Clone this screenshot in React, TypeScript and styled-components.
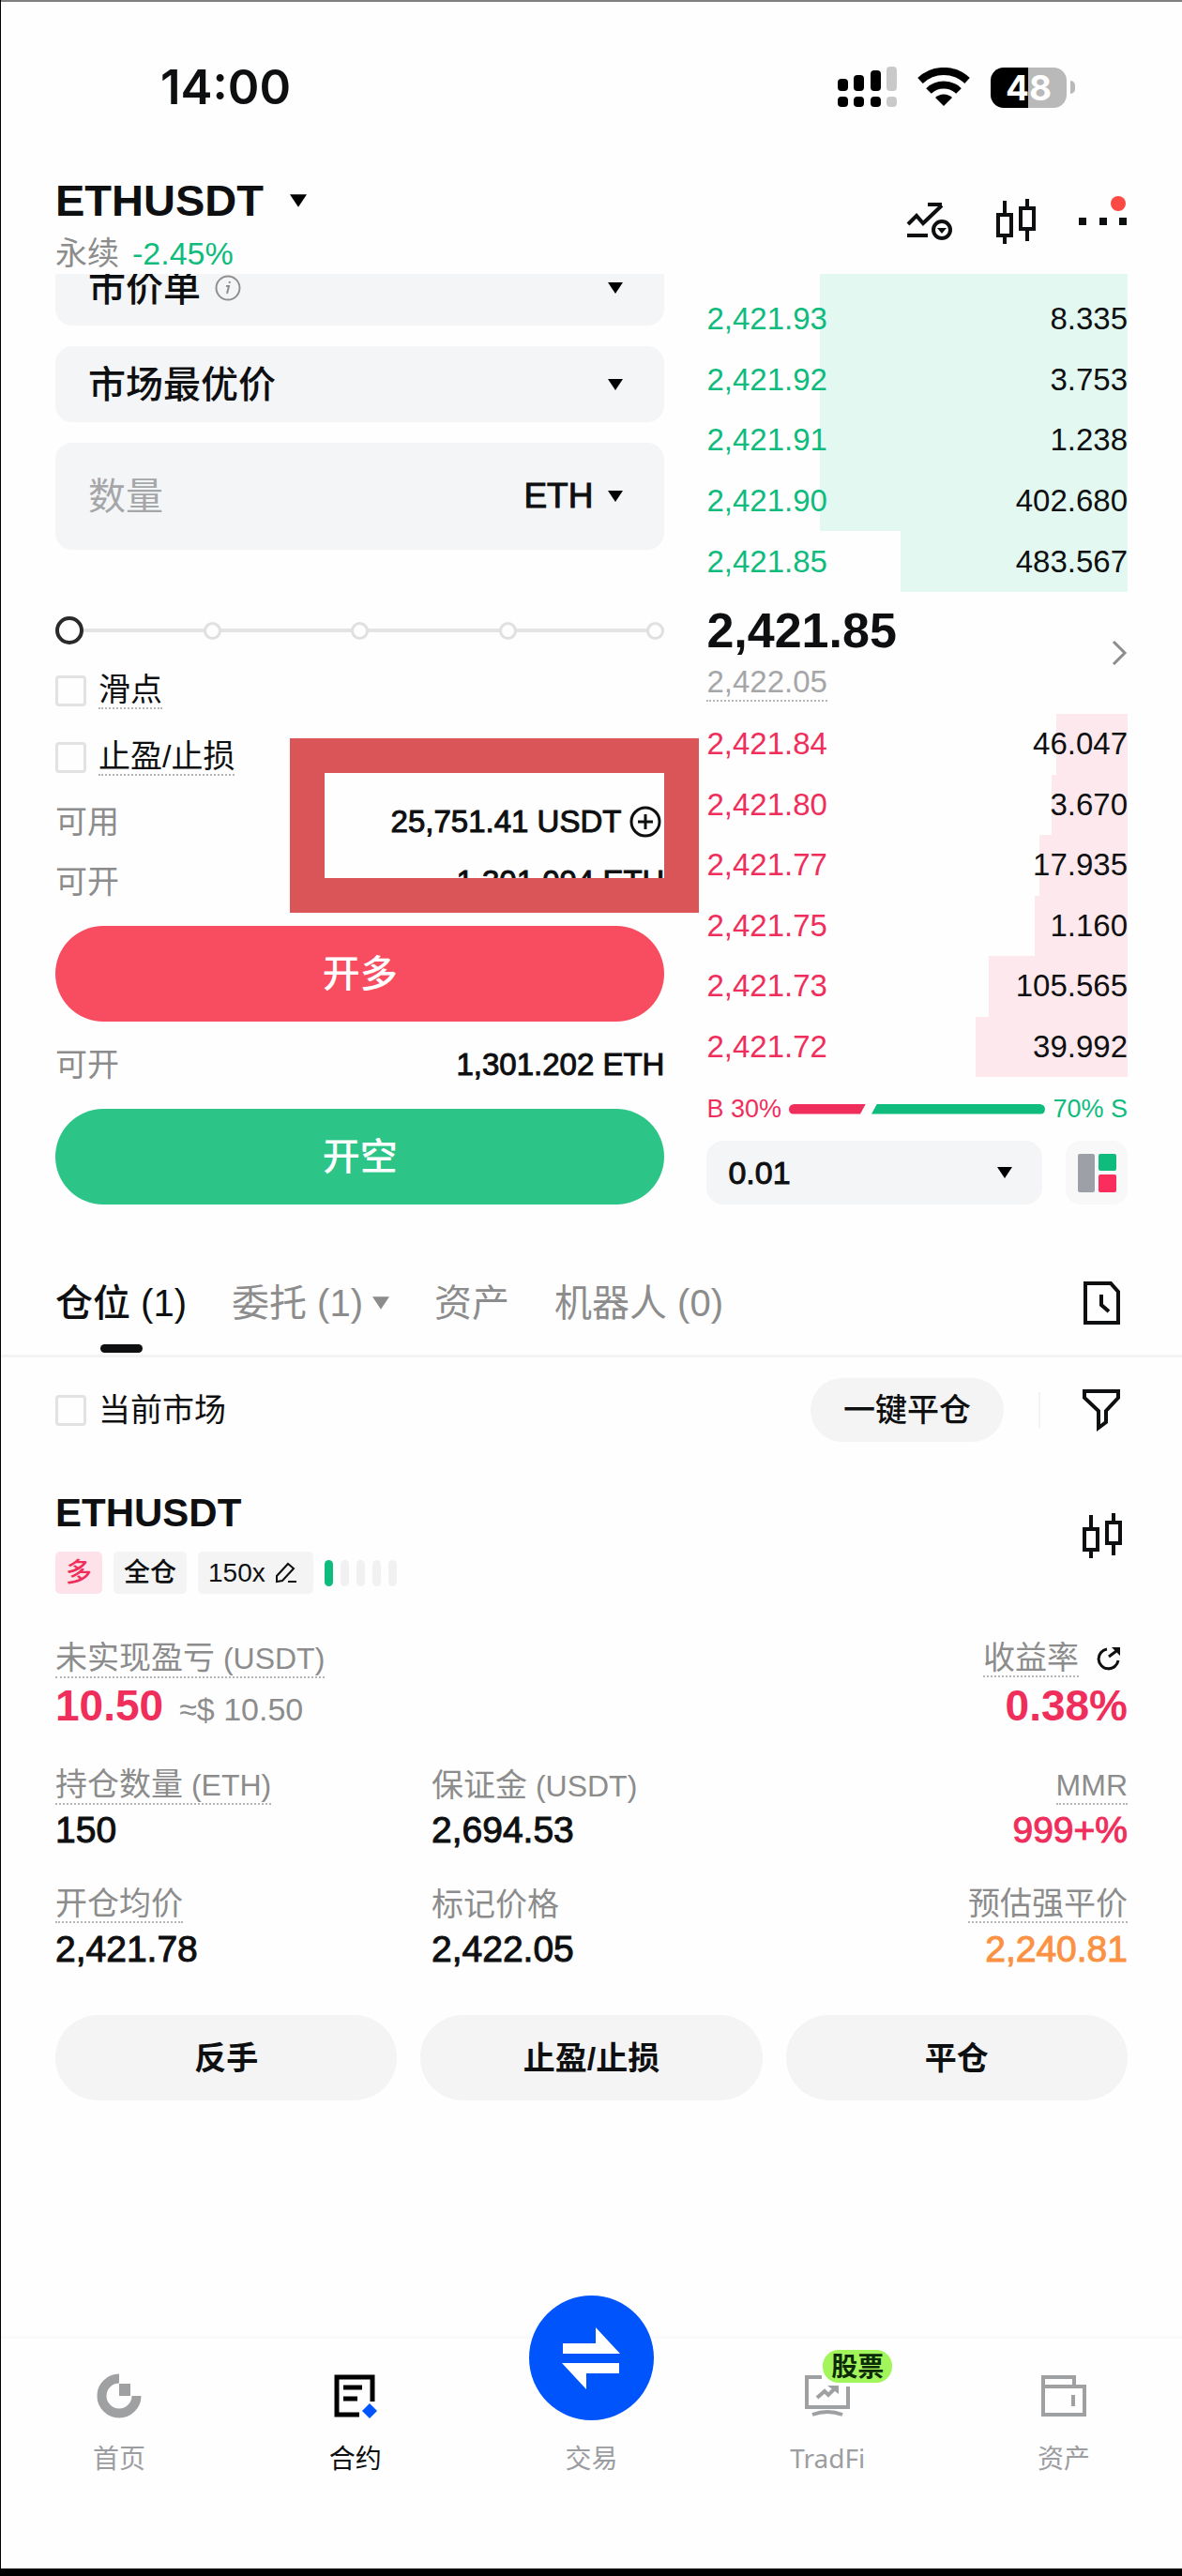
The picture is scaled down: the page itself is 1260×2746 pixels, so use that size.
import React, { useState } from "react";
import styled, { createGlobalStyle } from "styled-components";

const c = {
  ink: "#0e0f10",
  grey: "#8c8c8c",
  hint: "#a5a6a8",
  line: "#f3f3f3",
  field: "#f4f5f7",
  soft: "#f4f4f4",
  up: "#0fbb7d",
  down: "#f02e5b",
  upSoft: "#e3f8f1",
  downSoft: "#fde9ed",
};

const GlobalStyle = createGlobalStyle`
  * { box-sizing: border-box; }
  body {
    margin: 0;
    background: #fefefe;
    color: ${c.ink};
    font-family: "Liberation Sans", "Noto Sans CJK SC", sans-serif;
    font-size: 34px;
    line-height: 40px;
  }
  button, input, select {
    font: inherit;
    color: inherit;
    margin: 0;
    padding: 0;
    border: 0;
    background: none;
  }
  svg { display: block; flex: none; }
`;

const Page = styled.div`
  display: flex;
  flex-direction: column;
  min-height: 100vh;
  border: solid #000;
  border-width: 0 0 8px 1px;
  box-shadow: inset 0 2px 0 #808080;
`;

const StatusBar = styled.div`
  display: flex;
  align-items: center;
  justify-content: space-between;
  height: 186px;
  padding: 0 114px 0 170px;
`;
const Clock = styled.time`
  font-family: Inter, sans-serif;
  font-size: 51px;
  font-weight: 600;
`;
const StatusIcons = styled.div`
  display: flex;
  align-items: center;
  gap: 22px;
`;
const Battery = styled.div`
  display: flex;
  align-items: center;
  gap: 4px;
  &::after {
    content: "";
    width: 5px;
    height: 14px;
    border-radius: 0 5px 5px 0;
    background: #b9b9b9;
  }
`;
const BatteryBody = styled.div`
  width: 81px;
  height: 43px;
  border-radius: 14px;
  background: linear-gradient(to right, #000 50%, #b9b9b9 50%);
  color: #fff;
  font-family: Inter, sans-serif;
  font-size: 37px;
  line-height: 43px;
  font-weight: 700;
  text-align: center;
`;

const Header = styled.header`
  display: flex;
  justify-content: space-between;
  align-items: flex-start;
  height: 106px;
  padding: 0 58px;
`;
const PairButton = styled.button`
  display: flex;
  align-items: center;
  gap: 28px;
  font-size: 47px;
  line-height: 56px;
  font-weight: 700;
`;
const PairInfo = styled.div`
  display: flex;
  gap: 14px;
  margin-top: 8px;
  color: ${c.grey};
`;
const Change = styled.span`
  color: ${c.up};
`;
const HeaderTools = styled.div`
  display: flex;
  align-items: center;
  gap: 45px;
  height: 99px;
`;
const IconButton = styled.button`
  display: grid;
  place-items: center;
`;

const Trade = styled.main`
  display: grid;
  grid-template-columns: minmax(0, 650fr) minmax(0, 449fr);
  column-gap: 45px;
  padding: 0 58px;
  overflow: hidden;
`;
const OrderForm = styled.form`
  display: flex;
  flex-direction: column;
  margin-top: -26px;
`;
const Fields = styled.div`
  display: flex;
  flex-direction: column;
  gap: 22px;
`;
const Field = styled.div<{ $tall?: boolean }>`
  display: flex;
  align-items: center;
  height: ${(p) => (p.$tall ? 114 : 81)}px;
  padding: 0 44px 0 35px;
  border-radius: 18px;
  background: ${c.field};
  font-size: 40px;
  font-weight: 500;
`;
const Select = styled.select`
  appearance: none;
  height: 60px;
  line-height: 60px;
  outline: none;
`;
const Info = styled.span`
  margin-left: 15px;
`;
const Push = styled.span`
  flex: 1;
`;
const QtyInput = styled.input`
  flex: 1;
  min-width: 0;
  height: 60px;
  font-weight: 400;
  outline: none;
  &::placeholder {
    color: ${c.hint};
    opacity: 1;
  }
`;
const LatinSelect = styled(Select)`
  font-size: 34px;
  -webkit-text-stroke: 1px currentColor;
`;
const Unit = styled(LatinSelect)`
  font-size: 37px;
  margin-right: 16px;
`;

const Slider = styled.div`
  display: grid;
  align-items: center;
  margin: 71px 0 29px;
  > * {
    grid-area: 1 / 1;
  }
`;
const Stops = styled.div`
  display: flex;
  justify-content: space-between;
  align-items: center;
  background: linear-gradient(#e4e4e4, #e4e4e4) center / 100% 4px no-repeat;
`;
const Stop = styled.span`
  width: 19px;
  height: 19px;
  border: 3px solid #e0e0e0;
  border-radius: 50%;
  background: #fefefe;
`;
const Range = styled.input`
  appearance: none;
  width: 100%;
  height: 30px;
  outline: none;
  &::-webkit-slider-thumb {
    appearance: none;
    width: 30px;
    height: 30px;
    border: 4px solid #2a2a2a;
    border-radius: 50%;
    background: #fefefe;
  }
`;

const Checks = styled.div`
  display: flex;
  flex-direction: column;
  align-items: flex-start;
  gap: 31px;
`;
const CheckLabel = styled.label`
  display: flex;
  align-items: center;
  gap: 13px;
`;
const Tick = styled.input`
  appearance: none;
  width: 33px;
  height: 33px;
  border: 3px solid #e2e2e2;
  border-radius: 4px;
  &:checked {
    background: ${c.ink};
  }
`;
const Dotted = styled.span`
  display: inline-block;
  line-height: 38px;
  border-bottom: 2px dotted #b4b4b4;
`;

const Funds = styled.div`
  position: relative;
  display: flex;
  flex-direction: column;
  gap: 24px;
  margin: 29px 0 27px;
`;
const Marker = styled.div`
  position: absolute;
  inset: -69px -37px -13px 250px;
  border: 37px solid #da5558;
  pointer-events: none;
`;
const Line = styled.div`
  display: flex;
  justify-content: space-between;
  align-items: center;
`;
const Muted = styled.span`
  color: ${c.grey};
`;
const Amount = styled.span`
  display: flex;
  align-items: center;
  gap: 9px;
  font-size: 33px;
  -webkit-text-stroke: 1px currentColor;
`;
const Submit = styled.button<{ $color: string }>`
  height: 102px;
  border-radius: 51px;
  background: ${(p) => p.$color};
  color: #fff;
  font-size: 40px;
  font-weight: 500;
`;
const Between = styled(Line)`
  margin: 26px 0 27px;
`;

const Book = styled.section`
  display: flex;
  flex-direction: column;
`;
const band = (color: string, w: number) =>
  `linear-gradient(to left, ${color} ${w}%, transparent ${w}%)`;
const Bids = styled.div`
  display: grid;
  grid-auto-rows: 1fr;
  height: 339px;
  padding-top: 16px;
  background: ${band(c.upSoft, 73)} top / 100% 16px no-repeat;
`;
const Asks = styled.div`
  display: grid;
  grid-auto-rows: 1fr;
  height: 387px;
`;
const Level = styled.div<{ $w: number; $side: "up" | "down" }>`
  display: flex;
  align-items: center;
  justify-content: space-between;
  font-size: 33px;
  background: ${(p) => band(p.$side === "up" ? c.upSoft : c.downSoft, p.$w)};
`;
const Price = styled.span<{ $side: "up" | "down" }>`
  color: ${(p) => c[p.$side]};
`;
const Mid = styled.div`
  display: flex;
  align-items: center;
  justify-content: space-between;
  height: 130px;
`;
const MidPrices = styled.div`
  display: flex;
  flex-direction: column;
  align-items: flex-start;
  gap: 8px;
  color: ${c.hint};
  font-size: 33px;
`;
const Last = styled.strong`
  color: ${c.ink};
  font-size: 52px;
  line-height: 56px;
  font-weight: 700;
`;
const Ratio = styled.div`
  display: flex;
  align-items: center;
  gap: 8px;
  margin: 14px 0;
  font-size: 27px;
`;
const RatioBar = styled.div`
  flex: 1;
  display: grid;
  grid-template-columns: 30fr 70fr;
`;
const RatioPart = styled.span<{ $side: "up" | "down" }>`
  height: 11px;
  background: ${(p) => c[p.$side]};
  border-radius: ${(p) => (p.$side === "down" ? "6px 0 0 6px" : "0 6px 6px 0")};
  clip-path: ${(p) =>
    p.$side === "down"
      ? "polygon(0 0, 100% 0, calc(100% - 6px) 100%, 0 100%)"
      : "polygon(12px 0, 100% 0, 100% 100%, 6px 100%)"};
`;
const BookFoot = styled.div`
  display: flex;
  gap: 25px;
`;
const StepField = styled(Field)`
  flex: 1;
  height: 68px;
  padding: 0 32px 0 23px;
`;
const LayoutButton = styled(IconButton)`
  width: 66px;
  height: 68px;
  border-radius: 16px;
  background: #f8f8f9;
`;

const Tabs = styled.nav`
  display: flex;
  align-items: flex-start;
  gap: 48px;
  margin-top: 75px;
  padding: 0 66px 0 58px;
  border-bottom: 3px solid ${c.line};
`;
const Tab = styled.button<{ $active?: boolean }>`
  display: flex;
  flex-direction: column;
  align-items: center;
  gap: 14px;
  padding-bottom: 2px;
  font-size: 40px;
  line-height: 60px;
  font-weight: ${(p) => (p.$active ? 500 : 400)};
  color: ${(p) => (p.$active ? c.ink : c.grey)};
  &::after {
    content: "";
    width: 45px;
    height: 9px;
    border-radius: 5px;
    background: ${(p) => (p.$active ? c.ink : "transparent")};
  }
`;
const TabLabel = styled.span`
  display: flex;
  align-items: center;
  gap: 10px;
`;
const HistoryButton = styled(IconButton)`
  margin-left: auto;
  height: 60px;
`;

const FilterRow = styled.div`
  display: flex;
  align-items: center;
  justify-content: space-between;
  margin-top: 22px;
  padding: 0 66px 0 58px;
`;
const FilterTools = styled.div`
  display: flex;
  align-items: center;
`;
const CloseAll = styled.button`
  height: 68px;
  padding: 0 35px;
  border-radius: 34px;
  background: ${c.soft};
  font-size: 34px;
  font-weight: 500;
`;
const Rule = styled.span`
  width: 2px;
  height: 38px;
  margin: 0 45px 0 37px;
  background: ${c.line};
`;

const Position = styled.section`
  display: flex;
  flex-direction: column;
  margin-top: 50px;
  padding: 0 58px;
`;
const PositionHead = styled.div`
  display: flex;
  justify-content: space-between;
  padding-right: 5px;
`;
const ChartButton = styled(IconButton)`
  height: 100px;
`;
const Symbol = styled.h2`
  margin: 0 0 15px;
  font-size: 42px;
  line-height: 52px;
  font-weight: 700;
`;
const Tags = styled.div`
  display: flex;
  align-items: center;
  gap: 12px;
`;
const Tag = styled.span<{ $long?: boolean }>`
  display: flex;
  align-items: center;
  gap: 10px;
  height: 45px;
  padding: 0 11px;
  border-radius: 5px;
  font-size: 28px;
  font-weight: 500;
  color: ${(p) => (p.$long ? c.down : c.ink)};
  background: ${(p) => (p.$long ? "#fde3e9" : c.soft)};
`;
const Risk = styled.span`
  display: flex;
  gap: 8px;
`;
const RiskBar = styled.span<{ $on?: boolean }>`
  width: 9px;
  height: 28px;
  border-radius: 5px;
  background: ${(p) => (p.$on ? c.up : "#f1f1f1")};
`;
const Metrics = styled.dl`
  display: grid;
  grid-template-columns: 401fr 401fr 341fr;
  row-gap: 35px;
  margin: 49px 0 0;
`;
const Metric = styled.div<{ $wide?: boolean; $end?: boolean }>`
  display: flex;
  flex-direction: column;
  gap: 4px;
  grid-column: ${(p) => (p.$wide && !p.$end ? "span 2" : "auto")};
  align-items: ${(p) => (p.$end ? "flex-end" : "flex-start")};
`;
const MetricName = styled.dt`
  display: flex;
  align-items: center;
  gap: 18px;
  height: 40px;
  color: ${c.grey};
`;
const Ccy = styled.span`
  font-size: 32px;
`;
const MetricValue = styled.dd<{ $big?: boolean; $color?: string }>`
  display: flex;
  align-items: baseline;
  gap: 17px;
  margin: 0;
  font-size: ${(p) => (p.$big ? 46 : 39)}px;
  line-height: ${(p) => (p.$big ? 52 : 48)}px;
  font-weight: ${(p) => (p.$big ? 700 : 400)};
  -webkit-text-stroke: ${(p) => (p.$big ? 0 : 1)}px currentColor;
  color: ${(p) => p.$color ?? c.ink};
`;
const Approx = styled.span`
  color: ${c.grey};
  font-size: 34px;
  font-weight: 400;
`;
const Actions = styled.div`
  display: grid;
  grid-template-columns: repeat(3, 1fr);
  gap: 25px;
  margin-top: 46px;
`;
const Action = styled.button`
  height: 91px;
  border-radius: 46px;
  background: ${c.soft};
  font-size: 34px;
  font-weight: 700;
`;

const BottomNav = styled.nav`
  display: grid;
  grid-template-columns: repeat(5, 1fr);
  height: 248px;
  margin-top: auto;
  border-top: 3px solid #fafafa;
`;
const NavItem = styled.a<{ $active?: boolean }>`
  display: flex;
  flex-direction: column;
  align-items: center;
  gap: 22px;
  padding-top: 37px;
  color: ${(p) => (p.$active ? c.ink : "#9c9da0")};
  font-family: "Noto Sans", "Noto Sans CJK SC", sans-serif;
  font-size: 28px;
  text-decoration: none;
`;
const TradeDisc = styled.span`
  display: grid;
  place-items: center;
  width: 133px;
  height: 133px;
  margin: -83px 0 -2px;
  border-radius: 50%;
  background: #0054fb;
`;
const NavIcon = styled.span`
  position: relative;
`;
const Badge = styled.span`
  position: absolute;
  left: 19px;
  top: -25px;
  padding: 0 9px;
  border-radius: 17px;
  background: #a3f55c;
  color: #0b2a08;
  font-size: 28px;
  line-height: 35px;
  font-weight: 700;
  white-space: nowrap;
`;

const Caret = ({ color = "#000", size = 16 }: { color?: string; size?: number }) => (
  <svg width={size} height={size - 4} viewBox="0 0 16 12" fill={color}>
    <path d="M0 0h16L8 12z" />
  </svg>
);

const SignalIcon = () => (
  <svg width="63" height="44" viewBox="0 0 63 44">
    {[
      [0, 13],
      [17, 9],
      [35, 4],
      [52, 0],
    ].map(([x, top], i) => (
      <g key={x} fill={i === 3 ? "#c9c9c9" : "#000"}>
        <rect x={x} y={top} width="11" height={26 - top} rx="4" />
        <rect x={x} y="32" width="11" height="11" rx="4" />
      </g>
    ))}
  </svg>
);

const WifiIcon = () => (
  <svg width="56" height="42" viewBox="0 0 56 42" fill="none" stroke="#000">
    <path d="M3 14a36 36 0 0 1 50 0" strokeWidth="8" />
    <path d="M12 25a23 23 0 0 1 32 0" strokeWidth="8" />
    <path d="M28 41l-9-9a13 13 0 0 1 18 0z" fill="#000" stroke="none" />
  </svg>
);

const TrendIcon = () => (
  <svg width="50" height="42" viewBox="0 0 50 42" fill="none" stroke={c.ink} strokeWidth="4">
    <path d="M2 24l9-9 7 8L38 4M23 3h15" />
    <path d="M1 36h22" />
    <circle cx="38" cy="30" r="9" />
    <path d="M33 28h10l-5 6z" fill={c.ink} stroke="none" />
  </svg>
);

const CandlesIcon = () => (
  <svg width="44" height="48" viewBox="0 0 44 48" fill="none" stroke={c.ink} strokeWidth="4">
    <path d="M10 2v15M10 40v8M34 0v10M34 32v13" />
    <path d="M3 17h14v22H3zM27 10h14v22H27z" />
  </svg>
);

const MoreIcon = () => (
  <svg width="52" height="54" viewBox="0 0 52 54" fill={c.ink}>
    <path d="M0 23h8v8H0zM22 23h8v8h-8zM43 23h8v8h-8z" />
    <circle cx="42" cy="8" r="8" fill="#fb4a43" />
  </svg>
);

const InfoIcon = () => (
  <svg width="28" height="28" viewBox="0 0 28 28" fill="none" stroke="#8f8f8f" strokeWidth="2">
    <circle cx="14" cy="14" r="12.5" />
    <path d="M12 12h3l-2 8M16 7l-.5 2" />
  </svg>
);

const PlusIcon = () => (
  <svg width="37" height="34" viewBox="0 0 37 34" fill="none" stroke={c.ink} strokeWidth="3">
    <circle cx="17" cy="17" r="15" />
    <path d="M17 9v16M9 17h16" />
  </svg>
);

const ChevronIcon = () => (
  <svg width="17" height="28" viewBox="0 0 17 28" fill="none" stroke={c.grey} strokeWidth="3">
    <path d="M2 2l12 12L2 26" />
  </svg>
);

const LayoutIcon = () => (
  <svg width="41" height="41" viewBox="0 0 41 41">
    <rect width="18" height="41" rx="2" fill="#9da1a7" />
    <rect x="22" width="19" height="18" rx="2" fill={c.up} />
    <rect x="22" y="22" width="19" height="19" rx="2" fill="#fa2d5c" />
  </svg>
);

const HistoryIcon = () => (
  <svg width="39" height="46" viewBox="0 0 39 46" fill="none" stroke={c.ink} strokeWidth="4">
    <path d="M2 2h27l8 9v33H2z" />
    <path d="M19 14v11l8 7" />
  </svg>
);

const FilterIcon = () => (
  <svg width="40" height="46" viewBox="0 0 40 46" fill="none" stroke={c.ink} strokeWidth="4">
    <path d="M2 3h36v7L25 24v12l-8 6V24L2 10z" />
  </svg>
);

const EditIcon = () => (
  <svg width="30" height="24" viewBox="0 0 30 24" fill="none" stroke={c.ink} strokeWidth="2">
    <path d="M2 21v-6L14 2l6 5L8 20z" />
    <path d="M14 21h9" />
  </svg>
);

const ShareIcon = () => (
  <svg width="34" height="28" viewBox="0 0 34 28" fill="none" stroke={c.ink} strokeWidth="3">
    <path d="M12 4A10.500 10.500 0 1 0 24 16" />
    <path d="M14 12L22 6" />
    <path d="M17 2h9v9z" fill={c.ink} stroke="none" />
  </svg>
);

const HomeIcon = () => (
  <svg width="48" height="48" viewBox="0 0 48 48">
    <path d="M24 5.500A18.500 18.500 0 1 0 42.500 24" fill="none" stroke="#9fa0a2" strokeWidth="10" />
    <path d="M24 11h12v13H24z" fill="#9fa0a2" />
  </svg>
);

const FuturesIcon = () => (
  <svg width="48" height="48" viewBox="0 0 48 48" fill="none" stroke="#000" strokeWidth="5">
    <path d="M42 30V4H4v40h24" />
    <path d="M11 15h20M11 27h15" />
    <path d="M39 32l8 8-8 8-8-8z" fill="#0054fb" stroke="none" />
  </svg>
);

const SwapIcon = () => (
  <svg width="64" height="66" viewBox="0 0 64 66" fill="#fff">
    <path d="M2 17h35V0l26 28H2z" />
    <path d="M62 49H27v17L1 38h61z" />
  </svg>
);

const TradFiIcon = () => (
  <svg width="48" height="48" viewBox="0 0 48 48" fill="none" stroke="#9fa0a2" strokeWidth="4">
    <path d="M18 4H2v32h44V14" />
    <path d="M8 44q16-6 32 0" />
    <path d="M13 26l8-7 4 4 8-8" />
    <path d="M24 13h12v9z" fill="#9fa0a2" stroke="none" />
  </svg>
);

const WalletIcon = () => (
  <svg width="48" height="48" viewBox="0 0 48 48" fill="none" stroke="#9fa0a2" strokeWidth="4">
    <path d="M2 14V4h33v10M2 14h44v30H2z" />
    <path d="M34 23v12" />
  </svg>
);

const bids = [
  { price: "2,421.93", size: "8.335", depth: 73 },
  { price: "2,421.92", size: "3.753", depth: 73 },
  { price: "2,421.91", size: "1.238", depth: 73 },
  { price: "2,421.90", size: "402.680", depth: 73 },
  { price: "2,421.85", size: "483.567", depth: 54 },
];
const asks = [
  { price: "2,421.84", size: "46.047", depth: 17 },
  { price: "2,421.80", size: "3.670", depth: 18 },
  { price: "2,421.77", size: "17.935", depth: 21 },
  { price: "2,421.75", size: "1.160", depth: 22 },
  { price: "2,421.73", size: "105.565", depth: 33 },
  { price: "2,421.72", size: "39.992", depth: 36 },
];

export default function App() {
  const [percent, setPercent] = useState(0);
  return (
    <Page lang="zh-CN">
      <GlobalStyle />
      <StatusBar>
        <Clock>14:00</Clock>
        <StatusIcons>
          <SignalIcon />
          <WifiIcon />
          <Battery>
            <BatteryBody>48</BatteryBody>
          </Battery>
        </StatusIcons>
      </StatusBar>

      <Header>
        <div>
          <PairButton type="button">
            ETHUSDT <Caret size={18} />
          </PairButton>
          <PairInfo>
            永续 <Change>-2.45%</Change>
          </PairInfo>
        </div>
        <HeaderTools>
          <IconButton type="button" aria-label="行情">
            <TrendIcon />
          </IconButton>
          <IconButton type="button" aria-label="K线">
            <CandlesIcon />
          </IconButton>
          <IconButton type="button" aria-label="更多">
            <MoreIcon />
          </IconButton>
        </HeaderTools>
      </Header>

      <Trade>
        <OrderForm onSubmit={(e) => e.preventDefault()}>
          <Fields>
            <Field>
              <Select aria-label="订单类型">
                <option>市价单</option>
              </Select>
              <Info>
                <InfoIcon />
              </Info>
              <Push />
              <Caret />
            </Field>
            <Field>
              <Select aria-label="价格类型">
                <option>市场最优价</option>
              </Select>
              <Push />
              <Caret />
            </Field>
            <Field $tall>
              <QtyInput placeholder="数量" aria-label="数量" />
              <Unit aria-label="单位">
                <option>ETH</option>
              </Unit>
              <Caret />
            </Field>
          </Fields>

          <Slider>
            <Stops>
              {[0, 25, 50, 75, 100].map((s) => (
                <Stop key={s} />
              ))}
            </Stops>
            <Range
              type="range"
              aria-label="仓位比例"
              min={0}
              max={100}
              value={percent}
              onChange={(e) => setPercent(Number(e.target.value))}
            />
          </Slider>

          <Checks>
            <CheckLabel>
              <Tick type="checkbox" />
              <Dotted>滑点</Dotted>
            </CheckLabel>
            <CheckLabel>
              <Tick type="checkbox" />
              <Dotted>止盈/止损</Dotted>
            </CheckLabel>
          </Checks>

          <Funds>
            <Line>
              <Muted>可用</Muted>
              <Amount>
                25,751.41 USDT <PlusIcon />
              </Amount>
            </Line>
            <Line>
              <Muted>可开</Muted>
              <Amount>1,301.094 ETH</Amount>
            </Line>
            <Marker />
          </Funds>
          <Submit $color="#f84d60">开多</Submit>
          <Between>
            <Muted>可开</Muted>
            <Amount>1,301.202 ETH</Amount>
          </Between>
          <Submit $color="#2dc488">开空</Submit>
        </OrderForm>

        <Book>
          <Bids>
            {bids.map((l) => (
              <Level key={l.price} $w={l.depth} $side="up">
                <Price $side="up">{l.price}</Price>
                <span>{l.size}</span>
              </Level>
            ))}
          </Bids>
          <Mid>
            <MidPrices>
              <Last>2,421.85</Last>
              <Dotted>2,422.05</Dotted>
            </MidPrices>
            <ChevronIcon />
          </Mid>
          <Asks>
            {asks.map((l) => (
              <Level key={l.price} $w={l.depth} $side="down">
                <Price $side="down">{l.price}</Price>
                <span>{l.size}</span>
              </Level>
            ))}
          </Asks>
          <Ratio>
            <Price $side="down">B 30%</Price>
            <RatioBar>
              <RatioPart $side="down" />
              <RatioPart $side="up" />
            </RatioBar>
            <Price $side="up">70% S</Price>
          </Ratio>
          <BookFoot>
            <StepField>
              <LatinSelect aria-label="价格精度">
                <option>0.01</option>
              </LatinSelect>
              <Push />
              <Caret />
            </StepField>
            <LayoutButton type="button" aria-label="盘口布局">
              <LayoutIcon />
            </LayoutButton>
          </BookFoot>
        </Book>
      </Trade>

      <Tabs>
        <Tab $active>仓位 (1)</Tab>
        <Tab>
          <TabLabel>
            委托 (1) <Caret color={c.grey} size={18} />
          </TabLabel>
        </Tab>
        <Tab>资产</Tab>
        <Tab>机器人 (0)</Tab>
        <HistoryButton aria-label="历史">
          <HistoryIcon />
        </HistoryButton>
      </Tabs>

      <FilterRow>
        <CheckLabel>
          <Tick type="checkbox" />
          当前市场
        </CheckLabel>
        <FilterTools>
          <CloseAll>一键平仓</CloseAll>
          <Rule />
          <IconButton aria-label="筛选">
            <FilterIcon />
          </IconButton>
        </FilterTools>
      </FilterRow>

      <Position>
        <PositionHead>
          <div>
            <Symbol>ETHUSDT</Symbol>
            <Tags>
              <Tag $long>多</Tag>
              <Tag>全仓</Tag>
              <Tag>
                150x <EditIcon />
              </Tag>
              <Risk>
                <RiskBar $on />
                <RiskBar />
                <RiskBar />
                <RiskBar />
                <RiskBar />
              </Risk>
            </Tags>
          </div>
          <ChartButton aria-label="K线">
            <CandlesIcon />
          </ChartButton>
        </PositionHead>

        <Metrics>
          <Metric $wide>
            <MetricName>
              <Dotted>
                未实现盈亏<Ccy> (USDT)</Ccy>
              </Dotted>
            </MetricName>
            <MetricValue $big $color={c.down}>
              10.50 <Approx>≈$ 10.50</Approx>
            </MetricValue>
          </Metric>
          <Metric $wide $end>
            <MetricName>
              <Dotted>收益率</Dotted>
              <ShareIcon />
            </MetricName>
            <MetricValue $big $color={c.down}>
              0.38%
            </MetricValue>
          </Metric>
          <Metric>
            <MetricName>
              <Dotted>
                持仓数量<Ccy> (ETH)</Ccy>
              </Dotted>
            </MetricName>
            <MetricValue>150</MetricValue>
          </Metric>
          <Metric>
            <MetricName>
              <span>
                保证金<Ccy> (USDT)</Ccy>
              </span>
            </MetricName>
            <MetricValue>2,694.53</MetricValue>
          </Metric>
          <Metric $end>
            <MetricName>
              <Dotted>
                <Ccy>MMR</Ccy>
              </Dotted>
            </MetricName>
            <MetricValue $color={c.down}>999+%</MetricValue>
          </Metric>
          <Metric>
            <MetricName>
              <Dotted>开仓均价</Dotted>
            </MetricName>
            <MetricValue>2,421.78</MetricValue>
          </Metric>
          <Metric>
            <MetricName>标记价格</MetricName>
            <MetricValue>2,422.05</MetricValue>
          </Metric>
          <Metric $end>
            <MetricName>
              <Dotted>预估强平价</Dotted>
            </MetricName>
            <MetricValue $color="#fb9142">2,240.81</MetricValue>
          </Metric>
        </Metrics>

        <Actions>
          <Action>反手</Action>
          <Action>止盈/止损</Action>
          <Action>平仓</Action>
        </Actions>
      </Position>

      <BottomNav>
        <NavItem href="#home">
          <HomeIcon />
          首页
        </NavItem>
        <NavItem href="#futures" $active>
          <FuturesIcon />
          合约
        </NavItem>
        <NavItem href="#trade">
          <TradeDisc>
            <SwapIcon />
          </TradeDisc>
          交易
        </NavItem>
        <NavItem href="#tradfi">
          <NavIcon>
            <TradFiIcon />
            <Badge>股票</Badge>
          </NavIcon>
          TradFi
        </NavItem>
        <NavItem href="#assets">
          <WalletIcon />
          资产
        </NavItem>
      </BottomNav>
    </Page>
  );
}
